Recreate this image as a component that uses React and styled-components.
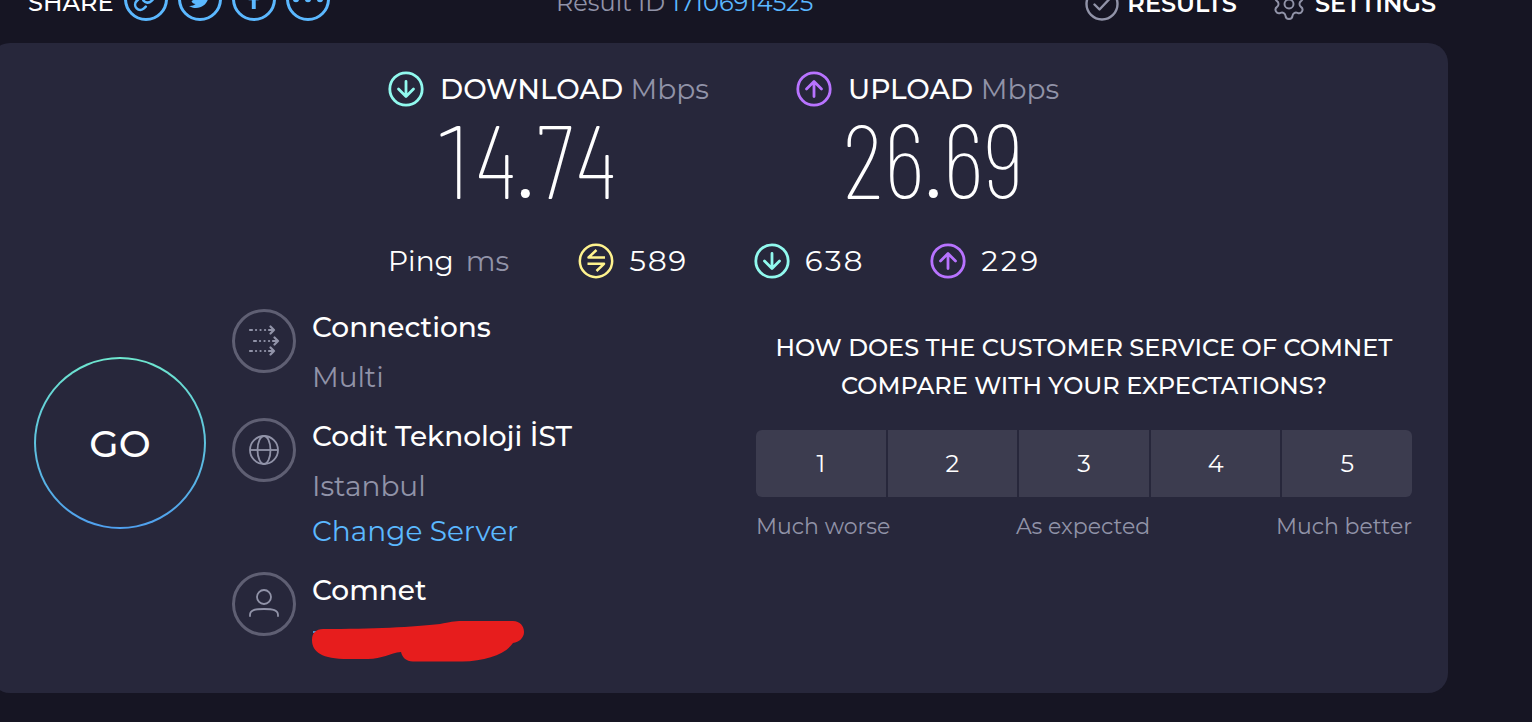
import React from "react";
import styled, { createGlobalStyle } from "styled-components";
import { Link as LinkIcon, Settings } from "lucide-react";
import { FaTwitter, FaFacebookF } from "react-icons/fa";

const color = {
  page: "#161523",
  panel: "#27273b",
  cell: "#3c3c4f",
  text: "#ffffff",
  muted: "#9193a8",
  ring: "#5f5f73",
  link: "#5bb8ff",
  download: "#91f9ee",
  upload: "#b873ff",
  ping: "#fff38e",
  marker: "#e71d1d",
};

const GlobalStyle = createGlobalStyle`
  *, *::before, *::after { box-sizing: border-box; }
  body {
    margin: 0;
    background: ${color.page};
    color: ${color.text};
    font-family: Montserrat, Inter, "Liberation Sans", sans-serif;
    font-size: 28px;
  }
  button {
    font: inherit;
    color: inherit;
    background: none;
    border: 0;
    padding: 0;
    cursor: pointer;
  }
  a { color: ${color.link}; text-decoration: none; }
  h2, p, dl, dt, dd { margin: 0; font: inherit; }
  svg { display: block; flex: none; }
`;

const Page = styled.div`
  overflow: hidden;
  padding: 0 84px 28px 0;
`;

const TopBar = styled.header`
  display: grid;
  grid-template-columns: 3fr 2fr 3fr;
  align-items: center;
  height: 44px;
  margin: -24px 12px 23px 28px;
  font-size: 24px;
  line-height: 28px;
`;

const Share = styled.div`
  display: flex;
  align-items: center;
  gap: 10px;
  font-weight: 500;
`;

const ShareLabel = styled.span`
  padding-top: 8px;
`;

const ShareButton = styled.button`
  display: flex;
  align-items: center;
  justify-content: center;
  width: 44px;
  height: 44px;
  border: 3px solid ${color.link};
  border-radius: 50%;
  color: ${color.link};
`;

const ResultId = styled.p`
  padding-top: 8px;
  color: ${color.muted};
  white-space: nowrap;
`;

const TopNav = styled.nav`
  display: flex;
  justify-content: flex-end;
  gap: 34px;
  padding-top: 10px;
`;

const NavLink = styled.a`
  display: flex;
  align-items: center;
  gap: 8px;
  color: ${color.text};
  font-weight: 600;

  svg { color: ${color.muted}; }
`;

const Panel = styled.main`
  margin-left: -10px;
  padding: 26px 36px 30px 44px;
  border-radius: 20px;
  background: ${color.panel};
`;

const Speeds = styled.section`
  width: 670px;
  max-width: 100%;
  margin: 0 auto;
`;

const SpeedRow = styled.div`
  display: grid;
  grid-template-columns: 408px auto;
`;

const SpeedLabel = styled.h2`
  display: flex;
  align-items: center;
  gap: 16px;
  height: 40px;
  font-weight: 500;
  line-height: 36px;
  white-space: nowrap;
`;

const Unit = styled.span`
  color: ${color.muted};
  font-weight: 400;
`;

const SpeedValue = styled.p`
  padding-left: 46px;
  font-family: "Barlow Condensed", "Roboto Condensed", Roboto, sans-serif;
  font-size: 104px;
  font-weight: 200;
  font-variant-numeric: tabular-nums;
  line-height: 98px;
`;

const PingRow = styled.dl`
  display: grid;
  grid-template-columns: 190px 176px 176px auto;
  align-items: center;
  margin-top: 34px;
  height: 40px;
`;

const PingName = styled.dt`
  display: flex;
  gap: 12px;
`;

const PingValue = styled.dd`
  display: flex;
  align-items: center;
  gap: 14px;
  font-variant-numeric: tabular-nums;
`;

const Details = styled.section`
  display: flex;
  align-items: flex-start;
  gap: 26px;
  margin-top: 28px;
`;

const GoButton = styled.button`
  flex: none;
  width: 172px;
  height: 172px;
  margin-top: 48px;
  border: 2px solid transparent;
  border-radius: 50%;
  background:
    linear-gradient(${color.panel}, ${color.panel}) padding-box,
    linear-gradient(#6ee7cf, #4f9fee) border-box;
  font-size: 38px;
  font-weight: 500;
`;

const InfoList = styled.div`
  display: flex;
  flex-direction: column;
  gap: 23px;
  flex: 1;
`;

const InfoRow = styled.div`
  display: flex;
  align-items: flex-start;
  gap: 16px;
  line-height: 36px;
`;

const InfoIcon = styled.span`
  display: flex;
  align-items: center;
  justify-content: center;
  flex: none;
  width: 64px;
  height: 64px;
  border: 3px solid ${color.ring};
  border-radius: 50%;
  color: ${color.muted};
`;

const InfoTitle = styled.h2`
  font-weight: 500;
`;

const InfoText = styled.p`
  margin-top: 14px;
  color: ${color.muted};
`;

const InfoLink = styled.a`
  display: block;
  margin-top: 9px;
`;

const Survey = styled.fieldset`
  flex: 0 1 656px;
  min-width: 0;
  margin: 20px 0 0;
  padding: 0;
  border: 0;
  text-align: center;
`;

const Question = styled.legend`
  width: 100%;
  padding: 0 0 25px;
  font-size: 24px;
  font-weight: 500;
  line-height: 38px;
`;

const Scale = styled.div`
  display: grid;
  grid-template-columns: repeat(5, 1fr);
  gap: 2px;
  overflow: hidden;
  border-radius: 6px;
`;

const ScaleButton = styled.button`
  height: 67px;
  background: ${color.cell};
  font-size: 24px;
`;

const ScaleLabels = styled.div`
  display: flex;
  justify-content: space-between;
  margin-top: 14px;
  color: ${color.muted};
  font-size: 22px;
  line-height: 32px;
`;

const Redaction = styled.svg`
  margin-top: 13px;
`;

const ArrowBadge = ({ up }) => (
  <svg width="36" height="36" viewBox="0 0 36 36" fill="none" stroke={up ? color.upload : color.download} strokeWidth="2.8" strokeLinecap="round" strokeLinejoin="round" aria-hidden="true">
    <circle cx="18" cy="18" r="16.2" />
    <path d={up ? "M18 25.500V11M10.500 18 18 10.500l7.500 7.500" : "M18 10.500v14.500M10.500 18 18 25.500l7.500-7.500"} />
  </svg>
);

const PingBadge = () => (
  <svg width="36" height="36" viewBox="0 0 36 36" fill="none" stroke={color.ping} strokeWidth="2.500" strokeLinejoin="round" aria-hidden="true">
    <circle cx="18" cy="18" r="16.2" />
    <path d="M27 14.500H10.500l8-7.500M9.500 20.800H26L18.500 28" />
  </svg>
);

const DotsIcon = () => (
  <svg width="32" height="12" viewBox="0 0 32 12" fill="currentColor" aria-hidden="true">
    <circle cx="4" cy="6" r="3.200" />
    <circle cx="16" cy="6" r="3.200" />
    <circle cx="28" cy="6" r="3.200" />
  </svg>
);

const CheckBadge = () => (
  <svg width="34" height="34" viewBox="0 0 34 34" fill="none" stroke="currentColor" strokeWidth="2.400" strokeLinecap="round" strokeLinejoin="round" aria-hidden="true">
    <circle cx="17" cy="17" r="15.500" />
    <path d="m9.500 17.500 5 5 9.500-10" />
  </svg>
);

const arrowRows = [
  { x: 2, y: 5 },
  { x: 6, y: 16 },
  { x: 2, y: 26 },
];

const ConnectionsIcon = () => (
  <svg width="32" height="32" viewBox="0 0 32 32" fill="none" stroke="currentColor" strokeWidth="2.200" strokeLinecap="round" strokeLinejoin="round" aria-hidden="true">
    {arrowRows.map(({ x, y }) => (
      <path key={y} d={`M${x} ${y}h2m4 0h.1m4.400 0h.1m4.400 0h.1m3.900 0h5m-3.500-3.500 3.500 3.500-3.500 3.500`} />
    ))}
  </svg>
);

const GlobeIcon = () => (
  <svg width="32" height="32" viewBox="0 0 32 32" fill="none" stroke="currentColor" strokeWidth="1.800" aria-hidden="true">
    <circle cx="16" cy="16" r="14" />
    <ellipse cx="16" cy="16" rx="6.500" ry="14" />
    <path d="M2 16h28" />
  </svg>
);

const PersonIcon = () => (
  <svg width="32" height="32" viewBox="0 0 32 32" fill="none" stroke="currentColor" strokeWidth="1.800" strokeLinecap="round" aria-hidden="true">
    <circle cx="16" cy="9" r="7" />
    <path d="M2 28v-1c0-5 5-6 14-6s14 1 14 6v1" />
  </svg>
);

const scores = [1, 2, 3, 4, 5];

export default function App() {
  return (
    <>
      <GlobalStyle />
      <Page>
        <TopBar>
          <Share>
            <ShareLabel>SHARE</ShareLabel>
            <ShareButton aria-label="Copy link"><LinkIcon size={25} strokeWidth={2.5} /></ShareButton>
            <ShareButton aria-label="Share on Twitter"><FaTwitter size={22} /></ShareButton>
            <ShareButton aria-label="Share on Facebook"><FaFacebookF size={20} /></ShareButton>
            <ShareButton aria-label="More options"><DotsIcon /></ShareButton>
          </Share>
          <ResultId>Result ID <a href="#result">17106914525</a></ResultId>
          <TopNav>
            <NavLink href="#results"><CheckBadge />RESULTS</NavLink>
            <NavLink href="#settings"><Settings size={36} strokeWidth={1.3} />SETTINGS</NavLink>
          </TopNav>
        </TopBar>
        <Panel>
          <Speeds>
            <SpeedRow>
              <div>
                <SpeedLabel><ArrowBadge /><span>DOWNLOAD <Unit>Mbps</Unit></span></SpeedLabel>
                <SpeedValue>14.74</SpeedValue>
              </div>
              <div>
                <SpeedLabel><ArrowBadge up /><span>UPLOAD <Unit>Mbps</Unit></span></SpeedLabel>
                <SpeedValue>26.69</SpeedValue>
              </div>
            </SpeedRow>
            <PingRow>
              <PingName>Ping <Unit>ms</Unit></PingName>
              <PingValue><PingBadge />589</PingValue>
              <PingValue><ArrowBadge />638</PingValue>
              <PingValue><ArrowBadge up />229</PingValue>
            </PingRow>
          </Speeds>
          <Details>
            <GoButton>GO</GoButton>
            <InfoList>
              <InfoRow>
                <InfoIcon><ConnectionsIcon /></InfoIcon>
                <div>
                  <InfoTitle>Connections</InfoTitle>
                  <InfoText>Multi</InfoText>
                </div>
              </InfoRow>
              <InfoRow>
                <InfoIcon><GlobeIcon /></InfoIcon>
                <div>
                  <InfoTitle>Codit Teknoloji İST</InfoTitle>
                  <InfoText>Istanbul</InfoText>
                  <InfoLink href="#servers">Change Server</InfoLink>
                </div>
              </InfoRow>
              <InfoRow>
                <InfoIcon><PersonIcon /></InfoIcon>
                <div>
                  <InfoTitle>Comnet</InfoTitle>
                  <Redaction width="212" height="42" viewBox="0 0 212 42" aria-hidden="true">
                    <path d="M1 11h5" stroke={color.link} strokeWidth="1.500" />
                    <path fill={color.marker} d="M11 8C60 8 102 6 128 3 138 1 142 0 150 0H201C208 0 212 5 212 11S207 21 201 22C194 33 174 40 150 40.500H101C94 40.500 90 36 89 31 78 32 70 38 56 38H36C10 38 0 31 0 19 0 12 4 8 11 8Z" />
                  </Redaction>
                </div>
              </InfoRow>
            </InfoList>
            <Survey>
              <Question>
                HOW DOES THE CUSTOMER SERVICE OF COMNET<br />
                COMPARE WITH YOUR EXPECTATIONS?
              </Question>
              <Scale>
                {scores.map((score) => <ScaleButton key={score}>{score}</ScaleButton>)}
              </Scale>
              <ScaleLabels>
                <span>Much worse</span>
                <span>As expected</span>
                <span>Much better</span>
              </ScaleLabels>
            </Survey>
          </Details>
        </Panel>
      </Page>
    </>
  );
}
